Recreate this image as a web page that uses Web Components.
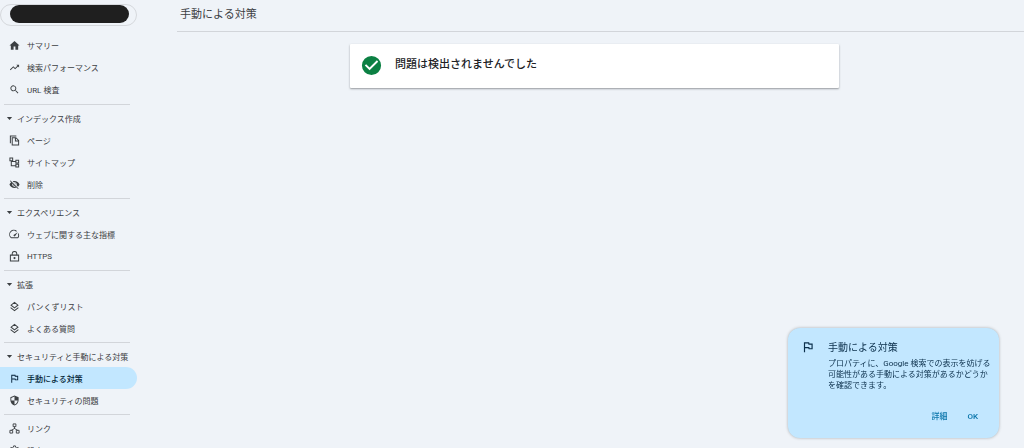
<!DOCTYPE html>
<html lang="ja">
<head>
<meta charset="utf-8">
<meta name="viewport" content="width=device-width, initial-scale=1">
<title>手動による対策</title>
<style>
  html, body { height: 100%; }
  body {
    margin: 0;
    background: #eff3f8;
    color: #3c4043;
    font-family: Roboto, "Noto Sans CJK JP", sans-serif;
    font-size: 8px;
    font-weight: 400;
    overflow: hidden;
  }
</style>
</head>
<body>
<console-app>
  <console-sidebar slot="sidebar">
    <property-picker></property-picker>
    <nav-group>
      <nav-item icon="home">サマリー</nav-item>
      <nav-item icon="trend">検索パフォーマンス</nav-item>
      <nav-item icon="search">URL 検査</nav-item>
    </nav-group>
    <nav-group heading="インデックス作成">
      <nav-item icon="pages">ページ</nav-item>
      <nav-item icon="sitemap">サイトマップ</nav-item>
      <nav-item icon="hidden">削除</nav-item>
    </nav-group>
    <nav-group heading="エクスペリエンス">
      <nav-item icon="speed">ウェブに関する主な指標</nav-item>
      <nav-item icon="lock">HTTPS</nav-item>
    </nav-group>
    <nav-group heading="拡張">
      <nav-item icon="layers">パンくずリスト</nav-item>
      <nav-item icon="layers">よくある質問</nav-item>
    </nav-group>
    <nav-group heading="セキュリティと手動による対策">
      <nav-item icon="flag" active>手動による対策</nav-item>
      <nav-item icon="shield">セキュリティの問題</nav-item>
    </nav-group>
    <nav-group>
      <nav-item icon="links">リンク</nav-item>
      <nav-item icon="settings">設定</nav-item>
    </nav-group>
  </console-sidebar>
  <page-header>手動による対策</page-header>
  <status-card>問題は検出されませんでした</status-card>
  <info-callout slot="callout">
    <span slot="title">手動による対策</span>
    プロパティに、Google 検索での表示を妨げる可能性がある手動による対策があるかどうかを確認できます。
  </info-callout>
</console-app>

<script>
const ICONS = {
  home: '<path d="M10 21v-7h4v7h6v-9h3L12 2 1 12h3v9z"/>',
  trend: '<path d="M16 6l2.3 2.3-4.9 4.9-4-4L2 16.6 3.4 18l6-6 4 4 6.3-6.3L22 12V6z"/>',
  search: '<path d="M15.5 14h-.8l-.3-.3A6.5 6.5 0 1 0 13.700 14.400l.3.3v.8l5 5 1.500-1.500zm-6 0a4.500 4.500 0 1 1 0-9 4.500 4.500 0 0 1 0 9z"/>',
  pages: '<path fill="none" stroke="currentColor" stroke-width="2.2" d="M16 2H3v16M7 6h8l6 6v10H7zM14 6v7h7"/>',
  sitemap: '<path fill="none" stroke="currentColor" stroke-width="2.2" d="M2 2h6v6H2zM15 7h6v6h-6zM15 16h6v6h-6zM5 8v11h10M5 10h10"/>',
  hidden: '<path d="M12 7a5 5 0 0 1 4.640 6.830l2.920 2.920A11.800 11.800 0 0 0 23 12C21.270 7.610 17 4.500 12 4.500c-1.400 0-2.740.25-3.980.7l2.160 2.160C10.740 7.130 11.350 7 12 7zM2 4.270l2.740 2.740A11.800 11.800 0 0 0 1 12c1.730 4.390 6 7.500 11 7.500 1.550 0 3.030-.3 4.380-.84L19.730 22 21 20.730 3.270 3zM7.530 9.800l1.550 1.550a3 3 0 0 0 3.570 3.570l1.550 1.550A5 5 0 0 1 7.530 9.800zm4.310-.78l3.150 3.150.02-.16a3 3 0 0 0-3-3z"/>',
  speed: '<path d="M20.400 8.600l-1.250 1.850A8 8 0 0 1 18.900 18H5.100A8 8 0 0 1 15.600 5.800l1.850-1.250A10 10 0 0 0 3.350 19a2 2 0 0 0 1.720 1h13.850a2 2 0 0 0 1.740-1 10 10 0 0 0-.27-10.440zM10.600 15.400a2 2 0 0 0 2.830 0l5.660-8.490-8.490 5.660a2 2 0 0 0 0 2.830z"/>',
  lock: '<path fill="none" stroke="currentColor" stroke-width="2.2" d="M3 9h18v13H3zM7 9V6a5 5 0 0 1 10 0v3"/><circle cx="12" cy="15.500" r="2.300"/>',
  layers: '<path fill="none" stroke="currentColor" stroke-width="2.2" d="M12 3l7.500 6-7.500 6-7.500-6zM3.500 14.500L12 21l8.500-6.500"/>',
  flag: '<path d="M12.360 6l.4 2H18v6h-3.360l-.4-2H7V6zM14 4H5v17h2v-7h5.600l.4 2h7V6h-5.600z"/>',
  shield: '<path d="M12 1L3 5v6c0 5.550 3.840 10.740 9 12 5.160-1.260 9-6.450 9-12V5zm0 11h7c-.53 4.120-3.280 7.790-7 8.940V12H5V6.300l7-3.110z"/>',
  links: '<path fill="none" stroke="currentColor" stroke-width="2" d="M9 2h6v6H9zM2 16h6v6H2zM16 16h6v6h-6zM12 8v5M5 16l7-4 7 4"/>',
  settings: '<path fill="none" stroke="currentColor" stroke-width="2" d="M10 2h4l.6 3 2.400 1.400 3-1 2 3.400-2.300 2v2.400l2.300 2-2 3.400-3-1-2.400 1.400-.6 3h-4l-.6-3L7 17.600l-3 1-2-3.400 2.300-2v-2.400l-2.300-2 2-3.400 3 1L9.400 5z"/><circle cx="12" cy="12" r="3"/>',
  check: '<path d="M12 2a10 10 0 1 0 0 20 10 10 0 0 0 0-20zm-2 15l-5-5 1.400-1.400L10 14.200l7.600-7.600L19 8z"/>',
  caret: '<path d="M5 8h14l-7 8z"/>'
};
const icon = name => `<svg viewBox="0 0 24 24" fill="currentColor" aria-hidden="true">${ICONS[name]}</svg>`;

class ShadowElement extends HTMLElement {
  connectedCallback() {
    if (this.shadowRoot) return;
    this.attachShadow({ mode: 'open' }).innerHTML = this.render();
  }
}

customElements.define('console-app', class extends ShadowElement {
  render() {
    return `<style>
      :host { display: grid; grid-template-columns: 137px minmax(0, 1fr); column-gap: 40px; height: 100vh; overflow: hidden; }
      aside { min-height: 0; overflow: hidden; }
    </style>
    <aside><slot name="sidebar"></slot></aside>
    <main><slot></slot></main>
    <slot name="callout"></slot>`;
  }
});

customElements.define('console-sidebar', class extends ShadowElement {
  render() {
    return `<style>:host { display: block; padding-top: 4px; }</style><nav><slot></slot></nav>`;
  }
});

customElements.define('property-picker', class extends ShadowElement {
  render() {
    return `<style>
      :host { display: block; margin-bottom: 8px; }
      button { display: flex; box-sizing: border-box; width: 100%; height: 22px; padding: 0 7px 0 9px; border: 1px solid #d5d8dc; border-radius: 11px; background: none; }
      span { flex: 1; height: 18px; border-radius: 9px; background: #1f1f1f; }
    </style>
    <button type="button" aria-label="プロパティ"><span></span></button>`;
  }
});

customElements.define('nav-group', class extends ShadowElement {
  render() {
    const heading = this.getAttribute('heading');
    return `<style>
      :host { display: block; padding-bottom: 3px; }
      :host(:first-of-type) { padding-bottom: 4px; }
      :host(:first-of-type) hr { display: none; }
      hr { height: 1px; margin: 0 7px 2px 4px; border: 0; background: #d2d5da; }
      button { display: flex; align-items: center; gap: 3px; height: 22px; width: 100%; padding: 0 0 0 5px; border: 0; background: none; color: inherit; font: inherit; white-space: nowrap; }
      svg { width: 9px; height: 9px; flex: none; }
    </style>
    <hr>
    ${heading ? `<button type="button" aria-expanded="true">${icon('caret')}${heading}</button>` : ''}
    <slot></slot>`;
  }
});

customElements.define('nav-item', class extends ShadowElement {
  render() {
    return `<style>
      :host { display: block; }
      a { display: flex; align-items: center; gap: 7px; height: 22px; padding-left: 9px; border-radius: 0 11px 11px 0; color: #3c4043; text-decoration: none; white-space: nowrap; }
      :host([active]) a { background: #c2e7ff; color: #001d35; font-weight: 500; }
      svg { width: 11px; height: 11px; flex: none; }
    </style>
    <a href="#"${this.hasAttribute('active') ? ' aria-current="page"' : ''}>${icon(this.getAttribute('icon'))}<slot></slot></a>`;
  }
});

customElements.define('page-header', class extends ShadowElement {
  render() {
    return `<style>
      :host { display: block; border-bottom: 1px solid #d2d5da; }
      h1 { margin: 0; padding: 5px 3px 6px; font-size: 11px; line-height: 20px; font-weight: 400; }
    </style>
    <h1><slot></slot></h1>`;
  }
});

customElements.define('status-card', class extends ShadowElement {
  render() {
    return `<style>
      :host { display: block; padding: 12px 12px 0 0; }
      section { display: flex; align-items: center; gap: 12px; box-sizing: border-box; max-width: 489px; min-height: 44px; margin: 0 auto; padding: 0 10px 2px; background: #fff; border-radius: 1px; box-shadow: 0 1px 2px rgba(60, 64, 67, .5); }
      svg { width: 23px; height: 23px; flex: none; color: #0b8043; }
      h2 { margin: 0; font-size: 11px; line-height: 16px; font-weight: 500; color: #202124; }
    </style>
    <section>${icon('check')}<h2><slot></slot></h2></section>`;
  }
});

customElements.define('info-callout', class extends ShadowElement {
  render() {
    return `<style>
      :host { display: block; position: fixed; right: 25px; bottom: 10px; box-sizing: border-box; width: 211px; padding: 12px 7px 12px 13px; border-radius: 12px; background: #c2e7ff; color: #0b2f4b; box-shadow: 0 0 3px rgba(60, 64, 67, .4); }
      .content { display: grid; grid-template-columns: 14px minmax(0, 1fr); column-gap: 13px; }
      svg { width: 14px; height: 14px; }
      h2 { margin: 0; font-size: 10px; line-height: 16px; font-weight: 400; }
      p { margin: 2px 0 0; line-height: 11px; }
      footer { display: flex; justify-content: flex-end; gap: 20px; padding: 17px 14px 0 0; }
      button { padding: 0; border: 0; background: none; color: #0b76ab; font: inherit; font-weight: 500; line-height: 18px; }
    </style>
    <div class="content">${icon('flag')}<div><h2><slot name="title"></slot></h2><p><slot></slot></p></div></div>
    <footer><button type="button">詳細</button><button type="button">OK</button></footer>`;
  }
});
</script>
</body>
</html>
